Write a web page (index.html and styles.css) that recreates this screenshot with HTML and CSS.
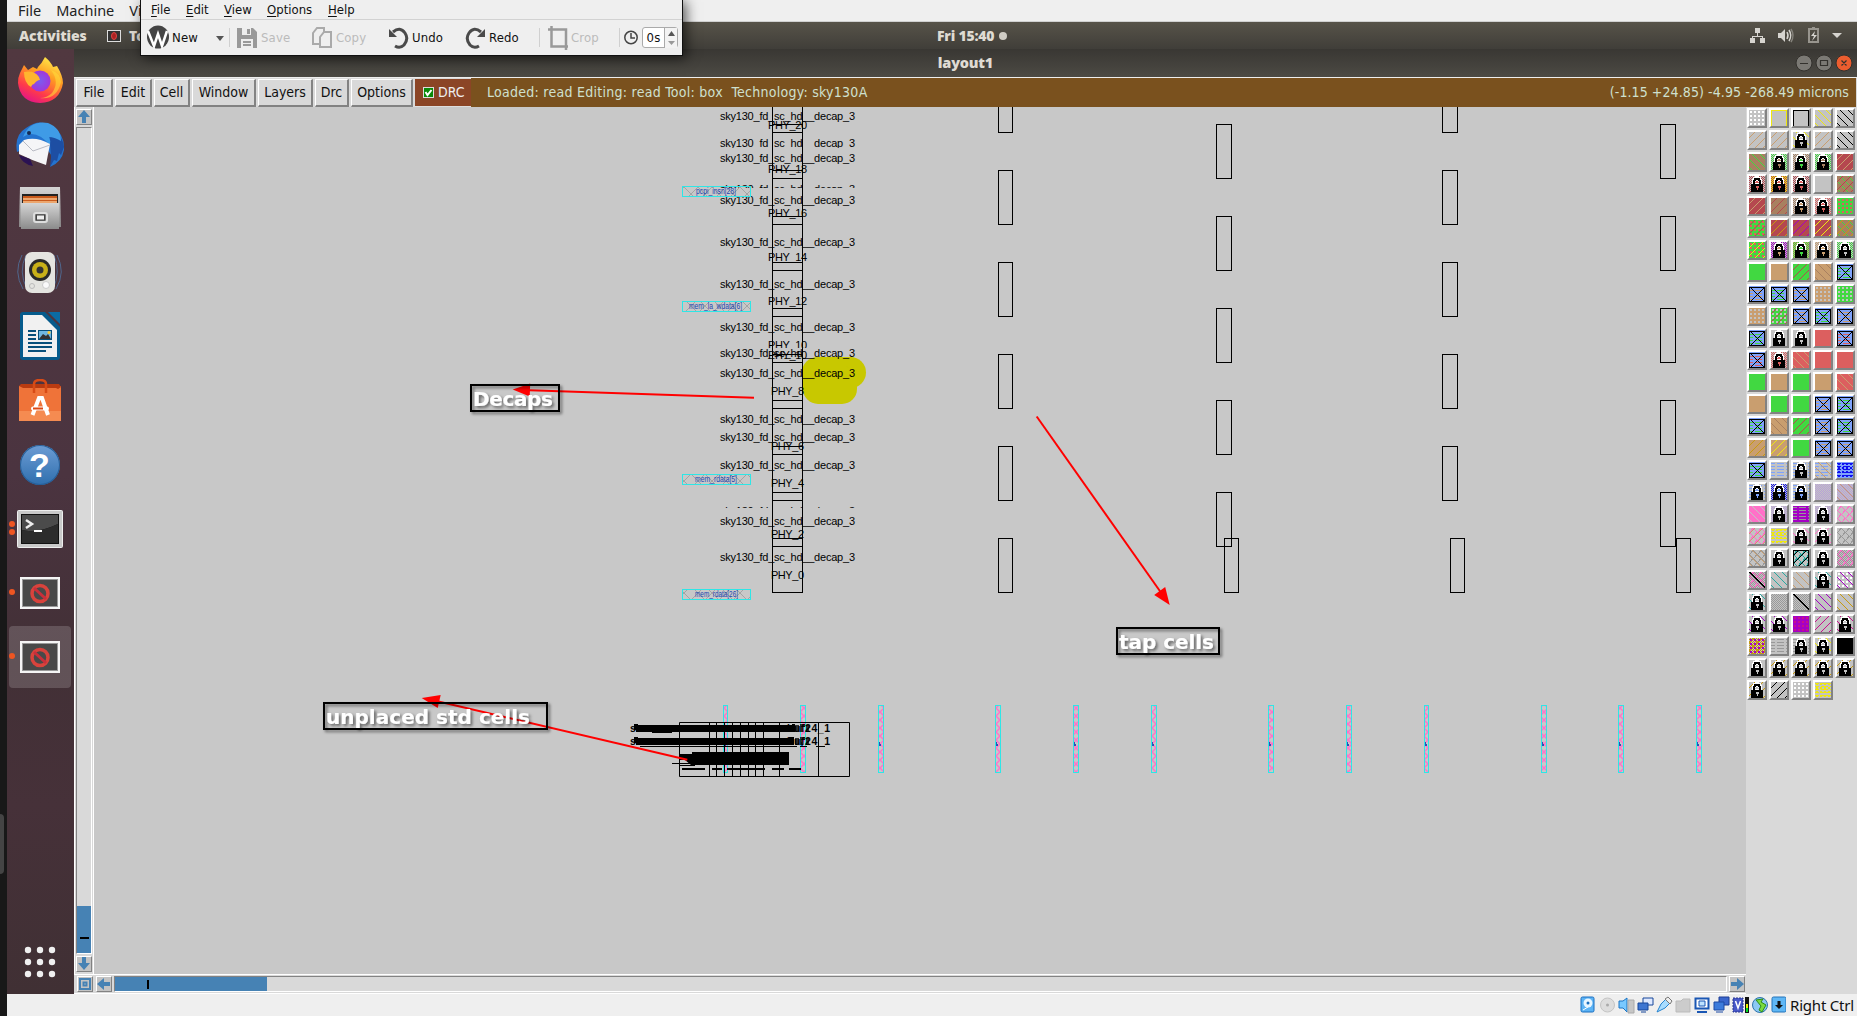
FILE: index.html
```html
<!DOCTYPE html>
<html lang="en">
<head>
<meta charset="utf-8">
<title>layout1</title>
<link rel="stylesheet" href="styles.css">
</head>
<body>
<div class="host-strip"><i class="host-handle"></i></div>
<div class="vm">
  <header class="vm-menu"><span>File</span><span>Machine</span><span>Vi</span></header>
  <div class="topbar">
    <b class="activities">Activities</b>
    <svg class="task-icon" width="14" height="12"><rect x=".5" y=".5" width="13" height="11" fill="#333" stroke="#ddd"/><ellipse cx="7" cy="6" rx="2.5" ry="3.5" fill="#a22" stroke="#d44"/></svg>
    <b class="task">To</b>
    <b class="clock">Fri 15:40 <i></i></b>
    <svg class="tray" width="100" height="27" fill="#d6d4cf">
      <path d="M5 6h5v5H5zM0 16h5v5H0zM10 16h5v5h-5zM7 11h1v3h5v2h-1v-1H3v1H2v-2h5z"/>
      <path d="M28 11h3l4-4v13l-4-4h-3z"/><path d="M37 10q2 3.500 0 7M39 8q3.500 5.500 0 11" fill="none" stroke="#d6d4cf" stroke-width="1.500"/><path d="M41 7q4 6.500 0 13" fill="none" stroke="#85837c" stroke-width="1.500"/>
      <path d="M59 7h9v13h-9zM62 6h3" fill="none" stroke="#98958e" stroke-width="2"/><path d="M65 9l-4 5h3l-2 5 5-6h-3z"/>
      <path d="M82 11h10l-5 5z"/>
    </svg>
  </div>
  <div class="guest">
    <nav class="dock">
      <div><svg width="48" height="48" viewBox="0 0 48 48"><defs><linearGradient id="ff" x1=".8" y1="0" x2=".3" y2="1"><stop offset="0" stop-color="#fff44f"/><stop offset=".4" stop-color="#ff9a22"/><stop offset=".75" stop-color="#ff3a4a"/><stop offset="1" stop-color="#e31587"/></linearGradient><radialGradient id="fp"><stop offset="0" stop-color="#7a5cf0"/><stop offset="1" stop-color="#a237d8"/></radialGradient></defs><path d="M4 17L8 9l4 5 5-3 4 2 1-2Q26 7 29 1q6 5 8 10l4-1q6 10 6 17Q44 46 24 47 4 46 2 27q0-6 2-10z" fill="url(#ff)"/><circle cx="24" cy="25" r="10.500" fill="url(#fp)"/><path d="M8 16q10-2 15 5l1 3q-3 0-6 4-2 0-3 3-7-4-7-15z" fill="#ffb52e"/><path d="M35 14q9 12 1 23-5 5-12 5 17 2 21-16-1-9-10-12z" fill="#ffd83a" opacity=".6"/></svg></div>
      <div><svg width="50" height="50" viewBox="0 0 50 50"><path d="M2 33q-3-17 9-24 13-10 26-2 13 8 12 24-2 12-14 17l3-9q-4-7-12-16z" fill="#2473cf"/><path d="M34 10q14 6 15 18l-3 8-2-2-2 8-3-1-4 7 1-10z" fill="#1d4ea3"/><path d="M8 18Q15 1 33 4q13 5 13 18-7-4-12-4 2 4 1 8Q20 9 8 18z" fill="#3f9be6"/><path d="M4 26l5-5q12-4 26 4l-4 21Q16 41 4 35z" fill="#f5f5f7"/><path d="M8 22l10 10 17-6" fill="none" stroke="#b9bbc4"/><circle cx="14" cy="14" r="2" fill="#172b54"/><path d="M4 36l11 4 3 7Q7 45 4 36z" fill="#2b1253"/></svg></div>
      <div><svg width="44" height="46" viewBox="0 0 44 46"><defs><linearGradient id="fl" x1="0" y1="0" x2="0" y2="1"><stop offset="0" stop-color="#d5d5d5"/><stop offset="1" stop-color="#8b8b8b"/></linearGradient></defs><path d="M2 2h40l1 40H1z" fill="url(#fl)"/><path d="M4 9h36v11H4z" fill="#222"/><path d="M5 11h34v8H5z" fill="#c85a1c"/><path d="M5 14h34M5 17h34" stroke="#f7c18a" stroke-width="1.500"/><path d="M3 18h38v26H3z" fill="url(#fl)"/><rect x="16" y="28" width="13" height="9" rx="2" fill="#777" stroke="#ddd" stroke-width="2"/><rect x="18.500" y="30" width="8" height="5" fill="#eee" stroke="#444"/></svg></div>
      <div><svg width="50" height="46" viewBox="0 0 50 46"><path d="M7 6q-9 17 1 34M42 6q9 17-1 34M11 6q-8 17 1 34M39 6q7 17-1 34" fill="none" stroke="#50678d"/><rect x="10" y="3" width="30" height="41" rx="7" fill="#e4e4e0"/><circle cx="25" cy="21" r="11" fill="#292929"/><circle cx="25" cy="21" r="8" fill="#c8b018"/><circle cx="25" cy="21" r="3.500" fill="#333"/><circle cx="31" cy="36" r="3.500" fill="#fafafa" stroke="#ccc"/><circle cx="17" cy="37" r="2.500" fill="none" stroke="#bbb"/></svg></div>
      <div><svg width="40" height="48" viewBox="0 0 40 48"><path d="M3 0h22l15 15v30q0 3-3 3H3q-3 0-3-3V3q0-3 3-3z" fill="#065b8c"/><path d="M3 3h19l15 15v27H3z" fill="#f1f1f1"/><path d="M28 0h12v12z" fill="#0b6ba4"/><path d="M8 19h8M8 23h8M8 27h8M8 31h24M8 35h24M8 39h18" stroke="#08507b" stroke-width="2"/><path d="M18 18h14v10H18z" fill="#08507b"/><path d="M19 19h12v8H19z" fill="#6fb8e2"/><path d="M19 27l4-5 3 2 2-2 3 5z" fill="#333"/><circle cx="29" cy="20.500" r="1.500" fill="#fc3"/></svg></div>
      <div><svg width="42" height="44" viewBox="0 0 42 44"><path d="M0 7h42v35H0z" fill="#ef7339"/><path d="M0 32h42v10H0z" fill="#f58b51"/><path d="M0 7l2-2h38l2 3-3 2-2-1H4z" fill="#b93b11"/><path d="M15 14V5q0-4 6-4t6 4v9" fill="none" stroke="#d84b16" stroke-width="2.500"/><path d="M13.500 36L20 19h3l6 17" fill="none" stroke="#fff" stroke-width="4"/><rect x="12" y="27.500" width="18" height="4" rx="2" fill="#fff"/><path d="M14 29.500h10" stroke="#dd4814" stroke-width="2"/></svg></div>
      <div class="help"><b>?</b></div>
      <div class="r2"><svg width="46" height="38"><rect x=".5" y=".5" width="45" height="37" rx="1" fill="#c9c9c9" stroke="#eee"/><rect x="4" y="4" width="38" height="30" fill="#111"/><path d="M5 5h36v9Q20 24 5 20z" fill="#4b4b4b"/><path d="M5 20Q20 24 41 14v19H5z" fill="#2c2c2c"/><path d="M9 10l6 4-6 4" fill="none" stroke="#eee" stroke-width="2.500"/><path d="M17 21h8" stroke="#fff" stroke-width="2"/></svg></div>
      <div class="r1"><svg width="40" height="32"><use href="#blocked"/></svg></div>
      <div class="r1 active"><svg width="40" height="32"><g id="blocked"><rect width="40" height="32" fill="#f5f5f5"/><rect x="2" y="2" width="36" height="28" fill="#999"/><rect x="3" y="3" width="34" height="26" fill="#494949"/><circle cx="20" cy="16.500" r="8" fill="none" stroke="#d8433c" stroke-width="3.500"/><path d="M14 11l12 11" stroke="#c92f3a" stroke-width="3"/></g></svg></div>
      <svg class="apps" width="32" height="32" fill="#f0f0f0"><circle cx="4" cy="4" r="3.200"/><circle cx="16" cy="4" r="3.200"/><circle cx="28" cy="4" r="3.200"/><circle cx="4" cy="16" r="3.200"/><circle cx="16" cy="16" r="3.200"/><circle cx="28" cy="16" r="3.200"/><circle cx="4" cy="28" r="3.200"/><circle cx="16" cy="28" r="3.200"/><circle cx="28" cy="28" r="3.200"/></svg>
    </nav>
    <main class="window">
      <div class="title"><b>layout1</b>
        <svg class="winbtns" width="58" height="20"><g stroke="#33312d"><circle cx="9" cy="9" r="8" fill="#7b7974"/><circle cx="29" cy="9" r="8" fill="#7b7974"/><circle cx="49" cy="9" r="8" fill="#ec5d2f"/></g><path d="M5 9.500h8M25.500 6.500h7v5h-7zM46.500 6.500l5 5m0-5l-5 5" fill="none" stroke="#33312d" stroke-width="1.200"/></svg>
      </div>
      <div class="menubar">
        <span>File</span><span>Edit</span><span>Cell</span><span>Window</span><span>Layers</span><span>Drc</span><span>Options</span>
        <div class="drc"><svg width="11" height="11"><rect x=".5" y=".5" width="10" height="10" fill="#0a8a0a" stroke="#ddd"/><path d="M2.500 5l2 3 4-5" stroke="#fff" stroke-width="2" fill="none"/></svg>DRC</div>
        <div class="caption"><span class="loaded">Loaded: read Editing: read Tool: box&nbsp; Technology: sky130A</span><span class="coords">(-1.15 +24.85) -4.95 -268.49 microns</span></div>
      </div>
      <div class="work">
        <div class="vscroll">
          <button><svg width="14" height="14"><path d="M7 0l6 7H9v6H5V7H1z"/></svg></button>
          <div class="trough"><i><u></u></i></div>
          <button><svg width="14" height="14"><path d="M7 13l6-7H9V0H5v6H1z"/></svg></button>
        </div>
        <svg class="canvas" id="canvas" width="1652" height="867" viewBox="94 107 1652 867">
          <defs>
            <pattern id="hatch" width="14" height="14" patternUnits="userSpaceOnUse" x="684" y="187"><path d="M0 0l14 14M14 0L0 14" stroke="#a4a4a4"/></pattern>
            <pattern id="pink" width="8" height="8" patternUnits="userSpaceOnUse"><path d="M0 0l8 8M8 0L0 8" stroke="#ff73c8" stroke-width="1.500"/></pattern>
            <filter id="shade" x="-10%" y="-30%" width="125%" height="180%"><feDropShadow dx="2" dy="2" stdDeviation="1.500" flood-opacity=".5"/></filter>
            <clipPath id="c1"><path d="M700 130h200v18H700z"/></clipPath>
            <clipPath id="c2"><path d="M700 180h200v8H700z"/></clipPath>
            <clipPath id="c3"><path d="M700 500h200v8H700z"/></clipPath>
            <clipPath id="c4"><path d="M700 330h200v18H700z"/></clipPath>
          </defs>
          <g fill="#c8c800"><rect x="802" y="357" width="64" height="31" rx="15.500"/><rect x="803" y="366" width="54" height="38" rx="15"/></g>
          <g id="layout"></g>
          <g class="pile">
            <path d="M679.500 722.500h170v54h-170zM709.500 722v54M716.500 722v54M724.500 722v54M732.500 722v54M740.500 722v54M748.500 722v54M755.500 722v54M763.500 722v54M779.500 722v54M818.500 722v54M640 746.500h157M800 746.500h7M816 746.500h9M672 763.500h30M679 765.500h16" fill="none" stroke="#000"/>
            <path d="M634 724h4v1h154v-1h3v8H672v1h-20v-1h-16v-2h-2zM634 737h4v1h151v-1h5v8H636v-2h-2zM680 754h12v-2h97v13h-98l-6-5h-5z"/>
            <path d="M795 725h4v7h-4zM800 724h5v3h-3v5h-2zM806 725h3v7h-3zM795 738h4v7h-4zM800 737h5v3h-3v5h-2zM806 738h3v7h-3z" opacity=".75"/>
            <path d="M682 769h23M712 769h10M727 769h38M772 769h12M789 769h12" stroke="#000" stroke-width="2"/>
            <g class="stacked"><text x="630" y="732">s</text><text x="787" y="732" textLength="43">buf24_1</text><text x="630" y="745">s</text><text x="787" y="745" textLength="43">buf24_1</text></g>
          </g>
          <g stroke="red" stroke-width="2" fill="red">
            <path d="M754 397.700L522 390"/><path d="M512.700 389.500l17.500-6-.5 13z" stroke="none"/>
            <path d="M1036.700 416.500L1162 594"/><path d="M1169.700 605l-15.500-10 11-8z" stroke="none"/>
            <path d="M687.300 759.700L432 700"/><path d="M421.700 698l19-3-3 13z" stroke="none"/>
          </g>
          <g class="note" filter="url(#shade)"><rect x="471" y="385" width="88" height="26"/><text x="473" y="406" textLength="80">Decaps</text></g>
          <g class="note" filter="url(#shade)"><rect x="1117" y="628" width="102" height="26"/><text x="1119" y="649" textLength="95">tap cells</text></g>
          <g class="note" filter="url(#shade)"><rect x="324" y="703" width="223" height="26"/><text x="326" y="724" textLength="204">unplaced std cells</text></g>
        </svg>
        <div class="hscroll">
          <button><svg width="14" height="14"><path d="M1 1h12v12H1zM3 3v8h8V3z" fill-rule="evenodd"/><path d="M4.500 4.500h5v5h-5z"/><path d="M6.500 6.500h1v1h-1z" fill="#d8d8d8"/></svg></button>
          <button><svg width="14" height="14"><path d="M0 7l7-6v4h6v4H7v4z"/></svg></button>
          <div class="trough"><i><u></u></i></div>
          <button><svg width="14" height="14"><path d="M14 7L7 1v4H1v4h6v4z"/></svg></button>
        </div>
        <div class="palette" id="palette"></div>
      </div>
    </main>
  </div>
  <footer class="status">
    <svg width="206" height="18">
      <g><rect x="1" y="1" width="13" height="15" rx="1.500" fill="#5cb3f5" stroke="#1b6fc0"/><circle cx="8" cy="7" r="4.500" fill="#e9f6ff"/><circle cx="8" cy="7" r="1.500" fill="#1b6fc0"/><path d="M3 14l5-3" stroke="#fff"/></g>
      <g transform="translate(20)"><circle cx="7.500" cy="9" r="7" fill="#ddd" stroke="#c4c4c4"/><circle cx="7.500" cy="9" r="1.500" fill="#aaa"/></g>
      <g transform="translate(38)"><path d="M1 5h4l4-3v14l-4-4H1z" fill="#79c9ff" stroke="#1b74c4"/><path d="M10 4h6v13h-6z" fill="#c6c6c6" stroke="#aaa"/></g>
      <g transform="translate(57)" fill="#3d75d1" stroke="#16479a"><path d="M6 2h10v7H6z" fill="#dfe9ff"/><path d="M1 7h10v7H1z"/><path d="M4 16h5"/></g>
      <g transform="translate(76)"><path d="M1 16l4-8 5-5 4 4-5 5z" fill="#a8dcff" stroke="#2683cf"/><path d="M9 3l3-2 4 4-2 3z" fill="#eee" stroke="#777"/></g>
      <g transform="translate(95)"><path d="M1 5h5l2-2h7v13H1z" fill="#ccc" stroke="#bbb"/></g>
      <g transform="translate(114)"><path d="M1.500 2.500h13v10h-13z" fill="#fff" stroke="#1a57b4" stroke-width="2"/><path d="M5 5h6v5H5z" fill="#bfe3ff" stroke="#1a57b4"/><path d="M3 16h10" stroke="#1a57b4" stroke-width="2"/></g>
      <g transform="translate(133)"><path d="M6 1h10v8H6z" fill="#3a66cc" stroke="#1d3d94"/><path d="M1 6h10v8H1z" fill="#3c7bdb" stroke="#1d4aa4"/><path d="M3 16h7" stroke="#1d4aa4"/></g>
      <g transform="translate(152)"><rect x="1" y="2" width="10" height="14" fill="#4757c7" stroke="#29368f" stroke-dasharray="2 1"/><path d="M3.500 5l2.500 7 2.500-7" fill="none" stroke="#fff" stroke-width="1.500"/><path d="M13 1h4v16h-4z" fill="#111"/><path d="M14 8h2v4h-2z" fill="#ee0"/><path d="M14 12h2v4h-2z" fill="#0d2"/></g>
      <g transform="translate(172)"><circle cx="8" cy="9" r="7.500" fill="#8cc8f2" stroke="#2d74ad"/><path d="M4 4l7-1-2 3 5 3-4 7-3-2 2-4z" fill="#7ada3f" stroke="#2c8c14"/></g>
      <g transform="translate(191)"><rect x="1" y="1" width="14" height="15" rx="1.500" fill="#5fb7f5" stroke="#2272b9"/><path d="M8 13l4-4H9.500V5h-3v4H4z" fill="#111"/></g>
    </svg>
    <span>Right Ctrl</span>
  </footer>
</div>

<aside class="shutter">
  <nav><span><u>F</u>ile</span><span><u>E</u>dit</span><span><u>V</u>iew</span><span><u>O</u>ptions</span><span><u>H</u>elp</span></nav>
  <div class="tools">
    <svg width="24" height="26"><ellipse cx="12" cy="12" rx="11" ry="11.500" fill="#444"/><path d="M2 6l6 15 4-12 4 12 5-15" fill="none" stroke="#fff" stroke-width="2.500"/></svg><span>New</span>
    <svg width="8" height="24"><path d="M0 10h8l-4 5z" fill="#555"/></svg><i></i>
    <svg width="20" height="24"><path d="M0 2h16l4 4v16H0z" fill="#999"/><path d="M5 2h9v7H5zM4 13h12v9H4z" fill="#eee"/><path d="M10 3h3v5h-3zM6 15h8v2H6zM6 18h8v2H6z" fill="#999"/></svg><span class="off">Save</span>
    <svg width="20" height="24" fill="#efefef" stroke="#aaa" stroke-width="2"><path d="M1 7l4-5h7v16H1z"/><path d="M8 11l4-5h7v15H8z"/></svg><span class="off">Copy</span>
    <svg width="20" height="24"><path d="M4 6q7-6 12 1 4 6-1 12-4 4-9 1" fill="none" stroke="#4a4a4a" stroke-width="3"/><path d="M0 3v8h8z" fill="#4a4a4a"/></svg><span>Undo</span>
    <svg width="20" height="24"><path d="M16 6Q9 0 4 7q-4 6 1 12 4 4 9 1" fill="none" stroke="#4a4a4a" stroke-width="3"/><path d="M20 3v8h-8z" fill="#4a4a4a"/></svg><span>Redo</span><i></i>
    <svg width="20" height="24"><path d="M0 3.500h18V24M3.500 0v20.500H20" fill="none" stroke="#999" stroke-width="2.500"/></svg><span class="off">Crop</span><i></i>
    <svg width="14" height="24"><circle cx="7" cy="11.500" r="6.200" fill="none" stroke="#444" stroke-width="1.500"/><path d="M7 7v5h4" fill="none" stroke="#444" stroke-width="1.500"/></svg>
    <div class="spin"><span>0s</span><svg width="13" height="20"><path d="M3 8l3.500-5L10 8z" fill="#555"/><path d="M3 13l3.500 4 3.500-4z" fill="#999"/></svg></div>
  </div>
</aside>
<script src="layout.js"></script>
</body>
</html>
```
FILE: styles.css
```css
* { box-sizing: border-box; }
body { margin: 0; width: 1857px; height: 1016px; overflow: hidden; display: flex; font-family: "DejaVu Sans Condensed", "DejaVu Sans", sans-serif; font-stretch: condensed; background: #181818; color: #111; }
svg { display: block; flex: none; }
.host-strip { width: 7px; display: flex; align-items: flex-end; padding-bottom: 142px; }
.host-handle { width: 4px; height: 60px; background: #444; border-radius: 0 6px 6px 0; }
.vm { width: 1850px; display: flex; flex-direction: column; }

.vm-menu { height: 22px; background: #efefef; border-bottom: 1px solid #d0d0d0; display: flex; gap: 15px; padding-left: 11px; font: 14.5px/20px "Noto Sans", sans-serif; color: #222; }
.topbar { height: 27px; background: linear-gradient(#575349, #403e39); color: #dfdbd2; display: flex; align-items: center; font: bold 14px/26px "Noto Sans", sans-serif; }
.activities { margin-left: 12px; width: 88px; white-space: nowrap; letter-spacing: -.1px; }
.task-icon { margin-right: 8px; }
.task { width: 100px; }
.clock { margin-left: 708px; display: flex; align-items: center; gap: 5px; letter-spacing: -.2px; white-space: nowrap; }
.clock i { width: 8px; height: 8px; border-radius: 50%; background: #cfccc4; }
.tray { margin-left: auto; margin-right: 7px; }

.guest { height: 945px; display: flex; }
.dock { width: 67px; background: linear-gradient(#513840, #4b3440 45%, #423036 65%, #463139 80%, #403034); display: flex; flex-direction: column; align-items: center; padding: 0 2px 16px 0; }
.dock > div { width: 65px; height: 64.1px; display: flex; align-items: center; justify-content: center; position: relative; flex: none; }
.dock > div:first-child { margin-top: -1px; }
.help b { width: 40px; height: 40px; border-radius: 50%; background: linear-gradient(#6c9cd4, #2f6fae); box-shadow: inset 0 0 0 1px #275f98; color: #fff; font: bold 34px/40px "Liberation Sans", sans-serif; text-align: center; }
.r1::before, .r2::before { content: ""; position: absolute; left: 2px; top: 28px; width: 6px; height: 6px; border-radius: 50%; background: #ee5522; z-index: 1; }
.r2::before { top: 24px; box-shadow: 0 8px #ee5522; }
.active::after { content: ""; position: absolute; left: 2px; top: 1px; width: 62px; height: 62px; border-radius: 4px; background: rgba(255,255,255,.17); }
.active svg { z-index: 1; }
.apps { margin-top: auto; }

.window { width: 1783px; display: flex; flex-direction: column; }
.title { height: 28px; background: linear-gradient(#393733, #4c4a44); color: #dfdbd2; display: flex; align-items: center; justify-content: center; position: relative; padding-bottom: 2px; font: bold 14.5px/26px "Noto Sans", sans-serif; letter-spacing: -.2px; }
.winbtns { position: absolute; right: 4px; top: 5px; }
.menubar { height: 30px; background: #d9d9d9; border-top: 1px solid #eee; padding: 1px 1px 0 2px; display: flex; gap: 2px; font-size: 14px; line-height: 25px; }
.menubar > span { border: 1px solid; border-width: 1px 2px 2px 1px; border-color: #fff #828282 #828282 #fff; text-align: center; width: 37px; }
.menubar > span:nth-child(3) { width: 36px; }
.menubar > span:nth-child(4) { width: 64px; }
.menubar > span:nth-child(5) { width: 55px; }
.menubar > span:nth-child(6) { width: 34px; }
.menubar > span:nth-child(7) { width: 62px; }
.drc { width: 56px; background: #8b4526; color: #eee; display: flex; align-items: center; gap: 4px; padding-left: 8px; border-bottom: 1px solid #ddd; }
.caption { flex: 1; margin-left: -2px; margin-top: -1px; padding: 2px 7px 0 16px; background: #7a511e; color: #cfe0cf; display: flex; justify-content: space-between; white-space: pre; }
.loaded { letter-spacing: .27px; }
.coords { letter-spacing: .09px; }

.work { display: grid; grid-template: 867px 20px / 20px 1652px 111px; }
.work button { width: 16px; height: 16px; padding: 0; border: 1px solid; border-color: #fff #828282 #828282 #fff; background: #c3c3c3; flex: none; overflow: hidden; }
.work button svg { fill: #4682b4; }
.vscroll { background: #d9d9d9; border-left: 1px solid #fff; border-right: 1px solid #fff; display: flex; flex-direction: column; align-items: center; gap: 2px; padding: 2px 0; }
.trough { border: 1px solid; border-color: #828282 #fff #fff #828282; display: flex; }
.vscroll .trough { width: 16px; flex: 1; align-items: flex-end; }
.trough i { background: #4682b4; display: flex; align-items: center; justify-content: center; }
.vscroll .trough i { width: 14px; height: 47px; padding-top: 16px; }
.vscroll u { width: 9px; height: 2px; background: #000; }
.hscroll { grid-column: 1 / 3; grid-row: 2; background: #d9d9d9; border-top: 1px solid #fff; border-bottom: 1px solid #fff; display: flex; align-items: center; gap: 2px; padding: 0 1px 0 3px; }
.hscroll button:nth-child(2) { margin-left: 1px; }
.hscroll .trough { flex: 1; height: 16px; }
.hscroll .trough i { width: 152px; height: 14px; padding-right: 87px; }
.hscroll u { width: 2px; height: 9px; background: #000; }
.canvas { background: #c8c8c8; grid-column: 2; grid-row: 1; }
.canvas text { font: 11px "Liberation Sans", Arial, sans-serif; }
.canvas .net { font-size: 8.5px; fill: #1b45b0; }
.canvas .stacked text { font-weight: bold; font-size: 10.5px; }
.note rect { fill: none; stroke: #000; stroke-width: 2; }
.canvas .note text { font: bold 20px "DejaVu Sans", sans-serif; fill: #fff; }
.palette { grid-column: 3; grid-row: 1 / 3; background: #d9d9d9; display: grid; grid-template-columns: repeat(5, 20px); grid-auto-rows: 20px; gap: 2px; padding: 1px 0 0 1px; }
.swatch { border: 2px solid; border-color: #fff #828282 #828282 #fff; background: #c3c3c3; }

.status { height: 22px; background: #efefef; display: flex; align-items: center; padding-left: 1573px; font: 15px/22px "Noto Sans", sans-serif; color: #111; white-space: nowrap; }
.status span { margin-left: 4px; letter-spacing: -.2px; }

.shutter { position: absolute; left: 140px; top: 0; width: 543px; height: 56px; background: #efefef; border: 1px solid #111; border-top: 0; box-shadow: 3px 2px 12px rgba(0,0,0,.65); font-size: 13px; }
.shutter nav { height: 20px; border-bottom: 1px solid #d2d2d2; display: grid; grid-template-columns: 35px 38px 43px 61px 50px; padding-left: 10px; line-height: 19px; }
.shutter u { text-underline-offset: 2px; }
.tools { display: grid; align-items: center; height: 35px; padding-left: 5px; grid-template-columns: 26px 44px 13px 8px 24px 51px 24px 53px 23px 53px 24px 50px 9px 23px 48px 5px 18px 36px; line-height: 34px; letter-spacing: .15px; }
.tools > i { width: 1px; height: 19px; background: #d0d0d0; }
.off { color: #bbb; }
.spin { width: 36px; height: 21px; border: 1px solid #aaa; border-radius: 3px; background: #fff; display: flex; line-height: 19px; }
.spin span { flex: 1; text-align: center; }
.spin svg { border-left: 1px solid #aaa; background: #f3f3f3; }
```
FILE: layout.js
```js
// Cell outlines, instance names and pins of the layout, in screen units.
const out = [];
const box = (x1, y1, x2, y2, color = '#000', fill = 'none') =>
  out.push(`<rect x="${x1 + .5}" y="${y1 + .5}" width="${x2 - x1}" height="${y2 - y1}" fill="${fill}" stroke="${color}"/>`);
const line = d => out.push(`<path d="${d}" stroke="#000"/>`);

[[998, 1012, 538], [1442, 1457, 446]].forEach(([a, b, y]) => {
  for (; y > 50; y -= 92) box(a, y, b, y + 54);
});
[[1216, 1231], [1660, 1675]].forEach(([a, b]) => {
  for (let y = 492; y > 100; y -= 92) box(a, y, b, y + 54);
});
box(1224, 538, 1238, 592); box(1450, 538, 1464, 592); box(1676, 538, 1690, 592);

line('M772.5 107V592M802.5 107V592M772 592.5h31');
for (let y = 546; y > 110; y -= 46) line(`M772 ${y - 7.5}h31M772 ${y + .5}h31`);

[[120], [147, 'c1'], [162], [193, 'c2'], [204], [246], [288], [331], [357], [377], [423], [441], [469], [515, 'c3'], [525], [561]]
  .forEach(([y, clip]) => out.push(`<text x="720" y="${y}" textLength="135" ${clip ? `clip-path="url(#${clip})"` : ''}>sky130_fd_sc_hd__decap_3</text>`));
[[20, 129], [18, 173], [16, 217], [14, 261], [12, 305], [10, 349, 'c4'], [10, 359], [8, 395], [6, 450], [4, 487], [2, 538], [0, 579]]
  .forEach(([n, y, clip]) => out.push(`<text x="${n > 9 ? 768 : 771}" y="${y}" textLength="${n > 9 ? 39 : 33}" ${clip ? `clip-path="url(#${clip})"` : ''}>PHY_${n}</text>`));

[[186, 'pcpi_insn[28]', 696, 40], [301, 'mem_la_wdata[6]', 689, 53], [474, 'mem_rdata[5]', 695, 42], [589, 'mem_rdata[26]', 695, 43]]
  .forEach(([y, name, x, w]) => {
    box(682, y, 750, y + 10, '#2ee6e6', 'url(#hatch)');
    out.push(`<text class="net" x="${x}" y="${y + 8}" textLength="${w}" lengthAdjust="spacingAndGlyphs">${name}</text>`);
  });
[723, 800, 878, 995, 1073, 1151, 1268, 1346, 1424, 1541, 1618, 1696].forEach((x, i) => {
  box(x, 705, x + (x === 723 || x === 1424 ? 4 : 5), 772, '#2ee6e6', 'url(#pink)');
  out.push(`<path d="M${x + 1} 742h1v2h1v2h-2z" fill="#2a50b4"/>`);
});
document.getElementById('layout').innerHTML = out.join('');

// Layer palette: first letter is the base colour, then pairs of fill style and colour.
const colors = { n: '#c3c3c3', t: '#c99e6f', g: '#41d841', w: '#a88060', r: '#b5484f', s: '#dc5f5f', b: '#7fa3fb', y: '#eee810', m: '#a500c5', p: '#ff70c8', c: '#2aa8a0', k: '#999', K: '#000', W: '#fff', o: '#c79a10', B: '#1010f0', v: '#b8a0d8', R: '#c8108c' };
const stipple = test => c => {
  let d = '';
  for (let y = 0; y < 16; y++) for (let x = 0; x < 16; x++) if (test(x, y)) d += `M${x} ${y}h1v1h-1z`;
  return `<path d="${d}" fill="${c}"/>`;
};
const styles = {
  '/': stipple((x, y) => (x + y) % 8 === 5),
  '\\': stipple((x, y) => (x - y + 16) % 8 === 3),
  '1': stipple((x, y) => x === y || x === y + 1),
  '#': stipple((x, y) => x % 4 > 0 && x % 4 < 3 && y % 4 > 0 && y % 4 < 3),
  ':': stipple((x, y) => (x + y) % 2 === 0),
  'x': stipple((x, y) => (x + y) % 8 === 4 || (x - y + 16) % 8 === 4 || (x + y) % 8 === 3 && y % 4 < 2),
  '=': stipple((x, y) => y % 3 === 1 && (x + y * 3) % 9 < 7),
  '^': c => `<path d="M0 0h16v16h-1V1H1v15H0z" fill="${c}"/>`,
  'X': c => `<path d="M0 1h16v15H0zM1 2v13h14V2z" fill-rule="evenodd"/>` + stipple((x, y) => y > 0 && (x === y || x + y === 16))('#000'),
  'L': c => `<path d="M3 8V3h1V1h2V0h4v1h2v2h1v5z" fill="#fff"/><path d="M4 8V4h1V2h6v2h1v4h-2V5H9V4H7v1H6v3z" fill="#000"/><path d="M7 5h2v1h1v1H6V6h1z" fill="${c}"/><path d="M2 8h12v8H2z" fill="#000"/><path d="M6.500 9.500h3v2h-1v2.500h-1v-2.500h-1z" fill="${c}"/>`
};
const rows = String.raw`
n#W n^y n^K n\y n\K
n/t n/t n\yLn n/t n\K
w\g n:gLw n:wLg n:gLw r/t
n:rLs y:rLs n:rLs n w\g/r
r/t w/r n:wLt n:sLs g#s
g#s/r r/o r/m r/y w\g/o
g#s/y n:mLt g:tLg t:nLt n:gLn
g t g/r t\w b=gXK
b=tXK b=gXK b=tXK t#n g#n
t#n g#n/r b=tXK b=gXK b=tXK
b=gXK nLn nLn s b=sXK
b=sXK n:sLs s\t s s
g t g t s\t
t g g b=tXK b=gXK
b=gXK t\w g/r b=tXK b=gXK
t/o t/y g b=tXK b=tXK
b=gXK n=b n=bLn n=b\t b=B#B
n=bLb n:BLb n=bLb n:v n:v\t
p\n n:vLn m=k n:vLn nxp
nxp/t n#y=y n\pLn n/pLn nxk
nxk\t nLn nxc^K/K nLn k:nxp
k:nxp1K n\c n\c\t n\cLn n#W\m
n\cLn k:n k:n1K n\m n\m\o
n\mLn n\mLn m#R n/R n\RLn
o:nxo#m n=k n=kLn n\yLn K
nLn n/oLn n/oLn n/oLn n/oLn
n/oLn n/K n#W n#y=y`.trim().split(/\s+/);
document.getElementById('palette').innerHTML = rows.map(code => {
  let body = `<rect width="16" height="16" fill="${colors[code[0]]}"/>`;
  for (let i = 1; i < code.length; i += 2) body += styles[code[i]](colors[code[i + 1]]);
  return `<div class="swatch"><svg width="16" height="16" shape-rendering="crispEdges">${body}</svg></div>`;
}).join('');
```
